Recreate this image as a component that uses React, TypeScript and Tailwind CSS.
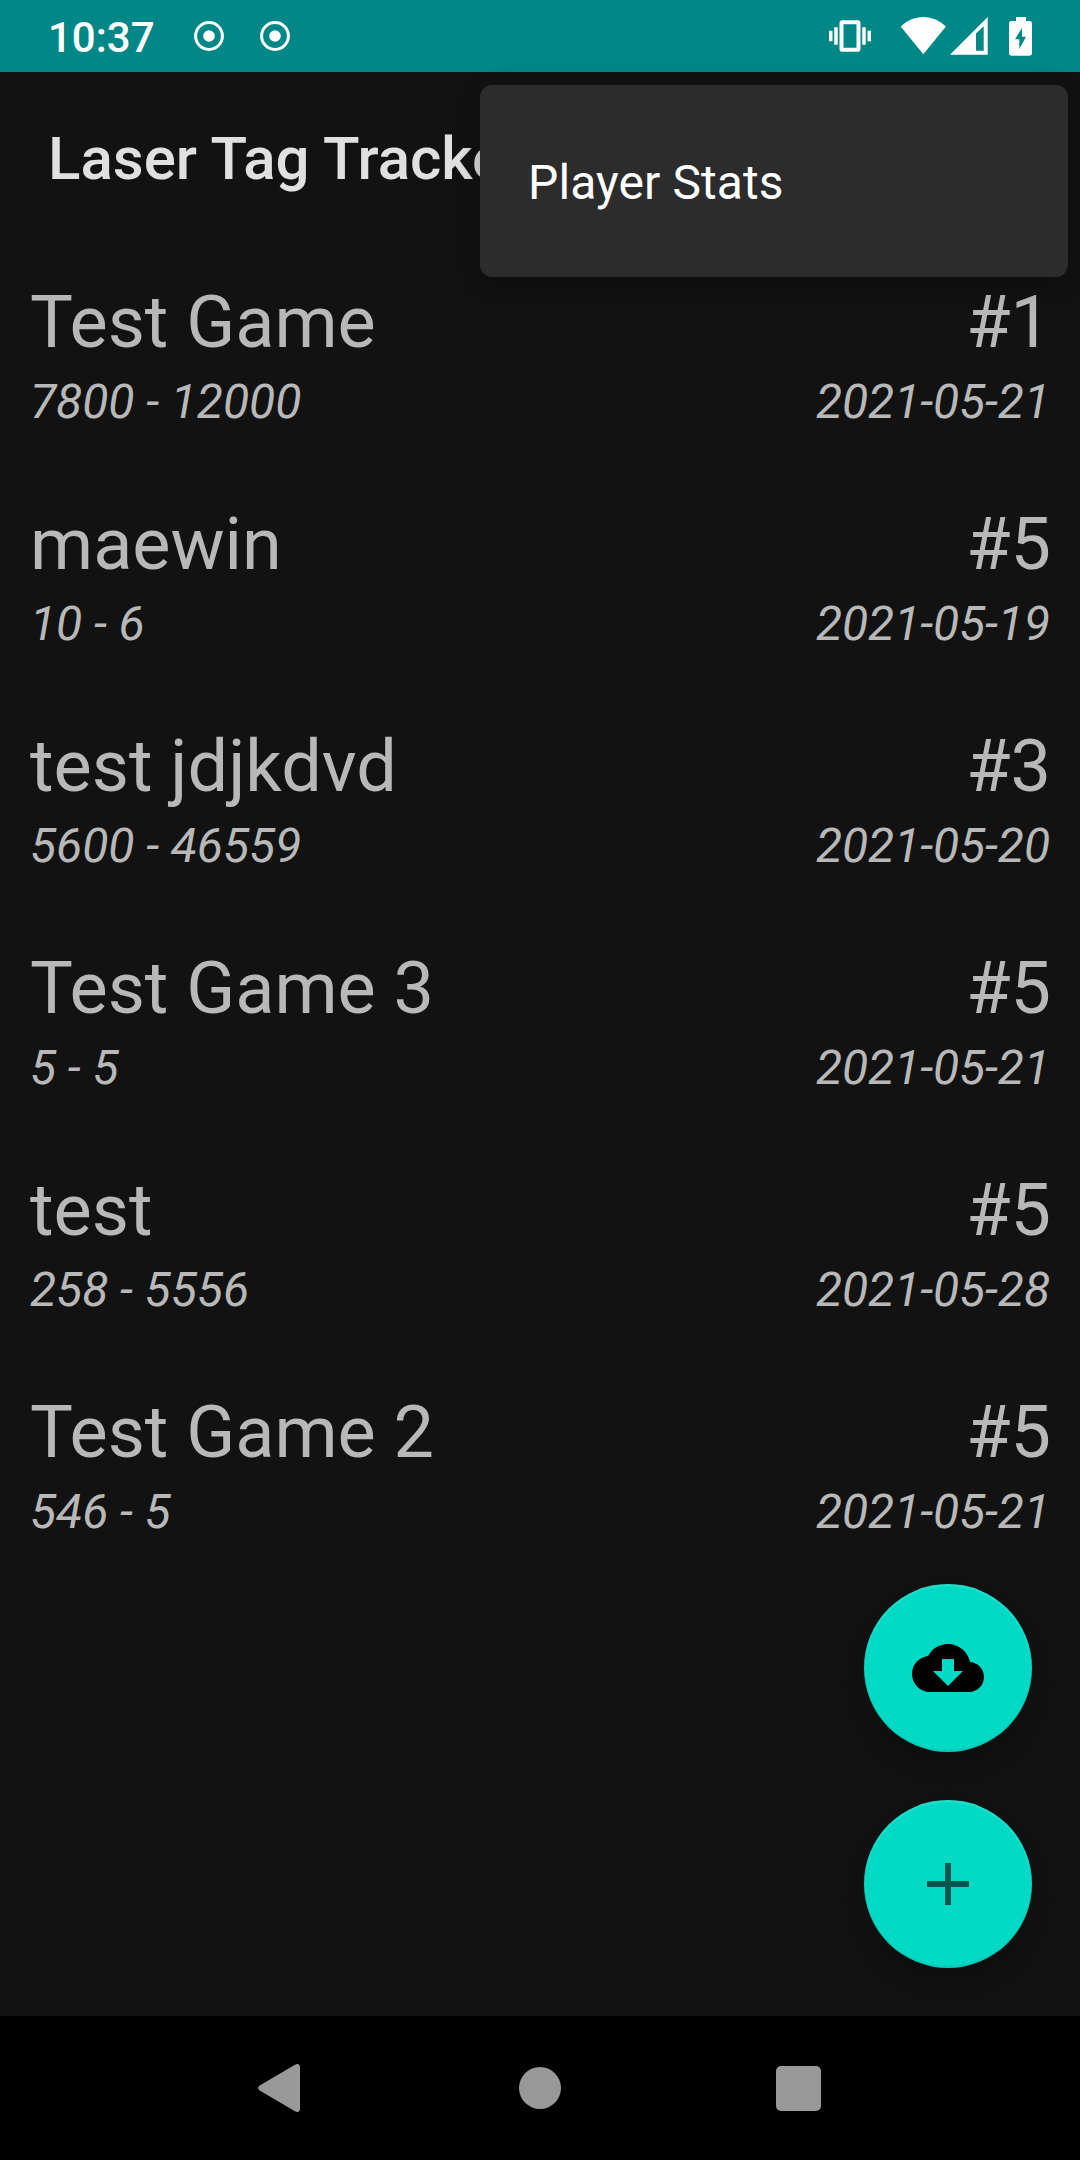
type Game = { name: string; score: string; rank: string; date: string };

const games: Game[] = [
  { name: 'Test Game', score: '7800 - 12000', rank: '#1', date: '2021-05-21' },
  { name: 'maewin', score: '10 - 6', rank: '#5', date: '2021-05-19' },
  { name: 'test jdjkdvd', score: '5600 - 46559', rank: '#3', date: '2021-05-20' },
  { name: 'Test Game 3', score: '5 - 5', rank: '#5', date: '2021-05-21' },
  { name: 'test', score: '258 - 5556', rank: '#5', date: '2021-05-28' },
  { name: 'Test Game 2', score: '546 - 5', rank: '#5', date: '2021-05-21' },
];

function RecordIcon() {
  return (
    <svg width="32" height="32" viewBox="0 0 32 32">
      <circle cx="16" cy="16" r="13.4" fill="none" stroke="white" strokeWidth="3" />
      <circle cx="16" cy="16" r="5.8" fill="white" />
    </svg>
  );
}

function VibrateIcon() {
  return (
    <svg width="42" height="42" viewBox="0 0 24 24" fill="white">
      <path d="M0 15h2V9H0v6zm3 2h2V7H3v10zm19-8v6h2V9h-2zm-3 8h2V7h-2v10zM16.5 3h-9C6.67 3 6 3.67 6 4.5v15c0 .83.67 1.5 1.5 1.5h9c.83 0 1.5-.67 1.5-1.5v-15c0-.83-.67-1.5-1.5-1.5zM15.7 18.7H8.3V5.3h7.4z" />
    </svg>
  );
}

function WifiIcon() {
  return (
    <svg width="46" height="38" viewBox="0 0 46 38" fill="white">
      <path d="M23.3 37.2 0.7 9.6C6.9 3.6 14.7 0 23.3 0s16.4 3.6 22.6 9.6z" />
    </svg>
  );
}

function SignalIcon() {
  return (
    <svg width="38" height="38" viewBox="0 0 38 38" fill="white" fillRule="evenodd">
      <path d="M37.7 0v37.7H0zM33.7 9.2 26 16.5v17.3h7.7z" />
    </svg>
  );
}

function BatteryIcon() {
  return (
    <svg width="23" height="39" viewBox="0 0 23 39" fill="white" fillRule="evenodd">
      <path d="M7 0h10v4h3.6A2.4 2.4 0 0 1 23 6.4v29.9a2.4 2.4 0 0 1-2.4 2.4H2.4A2.4 2.4 0 0 1 0 36.3V6.4A2.4 2.4 0 0 1 2.4 4H7zM13 11 6 22.2h4.3V32L17 19.8h-4z" />
    </svg>
  );
}

function StatusBar() {
  return (
    <header className="flex h-[72px] shrink-0 items-center bg-[#018786] pl-12 pr-12 text-white">
      <span className="w-[145px] pt-1 text-[42px] font-medium leading-[68px]">10:37</span>
      <div className="flex gap-[34px]">
        <RecordIcon />
        <RecordIcon />
      </div>
      <div className="ml-auto flex items-center">
        <VibrateIcon />
        <div className="ml-[29px] flex gap-1">
          <WifiIcon />
          <SignalIcon />
        </div>
        <div className="ml-[21px]">
          <BatteryIcon />
        </div>
      </div>
    </header>
  );
}

function GameRow({ game }: { game: Game }) {
  return (
    <li className="flex h-[222px] justify-between pl-[30px] pr-[29px] pt-[35px] text-[#b8b8b8]">
      <div>
        <p className="text-[72px] leading-[96px]">{game.name}</p>
        <p className="text-5xl italic leading-[62px] tracking-[-0.05px]">{game.score}</p>
      </div>
      <div className="text-right">
        <p className="text-[72px] leading-[96px]">{game.rank}</p>
        <p className="pr-px text-5xl italic leading-[62px] tracking-[-0.1px]">{game.date}</p>
      </div>
    </li>
  );
}

const fabClass =
  'flex size-[168px] items-center justify-center rounded-full bg-[#03dac5] shadow-[0_14px_24px_rgba(0,0,0,0.22),inset_0_2px_2px_rgba(255,255,255,0.15),inset_0_-2px_2px_rgba(0,0,0,0.08)]';

export default function App() {
  return (
    <div className="relative flex h-[2160px] w-[1080px] flex-col overflow-hidden bg-[#121212] font-['Roboto',sans-serif]">
      <StatusBar />
      <div className="flex h-[168px] shrink-0 items-center px-12">
        <h1 className="whitespace-nowrap pt-1.5 text-[60px] font-medium leading-[80px] text-[#e0e0e0]">Laser Tag Tracker</h1>
      </div>
      <ul className="flex-1">
        {games.map((game) => (
          <GameRow key={game.name} game={game} />
        ))}
      </ul>

      <nav className="grid h-36 shrink-0 grid-cols-[1fr_42px_1fr] items-center bg-black">
        <button className="ml-[258px] w-[42px]" aria-label="Back">
          <svg width="42" height="48" viewBox="0 0 42 48" fill="#999">
            <path d="M37 .7Q42-1.5 42 4v40q0 5.5-5 3.3L1.7 26.5Q-1.5 24 1.7 21.5z" />
          </svg>
        </button>
        <button className="size-[42px] rounded-full bg-[#999]" aria-label="Home" />
        <button className="ml-[214.5px] size-[45px] rounded-[5px] bg-[#999]" aria-label="Recents" />
      </nav>

      <div className="absolute bottom-48 right-12 flex flex-col gap-12">
        <button className={fabClass} aria-label="Download">
          <svg width="72" height="72" viewBox="0 0 24 24">
            <path d="M19.35 10.04C18.67 6.59 15.64 4 12 4 9.11 4 6.6 5.64 5.35 8.04 2.34 8.36 0 10.91 0 14c0 3.31 2.69 6 6 6h13c2.76 0 5-2.24 5-5 0-2.64-2.05-4.78-4.65-4.96zM17 13l-5 5-5-5h3V9h4v4h3z" />
          </svg>
        </button>
        <button className={fabClass} aria-label="Add">
          <svg width="72" height="72" viewBox="0 0 24 24" fill="#01574f">
            <path d="M19 13h-6v6h-2v-6H5v-2h6V5h2v6h6v2z" />
          </svg>
        </button>
      </div>

      <div className="absolute right-3 top-[85px] flex h-48 w-[588px] items-center rounded-xl bg-[#2c2c2c] px-12 shadow-[0_6px_24px_rgba(0,0,0,0.3)]">
        <span className="pt-1 text-5xl leading-[60px] tracking-[0.1px] text-white">Player Stats</span>
      </div>
    </div>
  );
}
